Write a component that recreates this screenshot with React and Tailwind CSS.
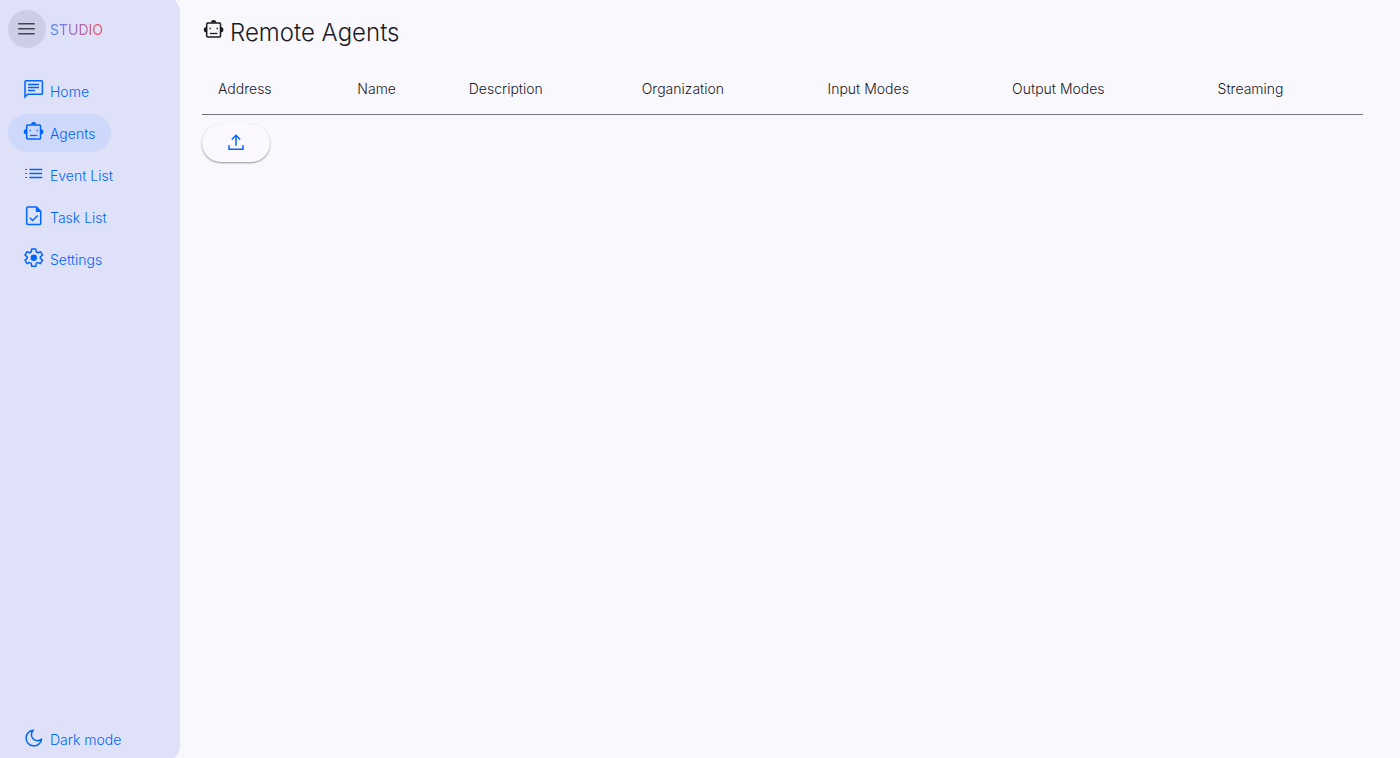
import { useState } from "react";

const navItems = [
  { label: "Home", icon: ChatIcon },
  { label: "Agents", icon: RobotIcon },
  { label: "Event List", icon: ListIcon },
  { label: "Task List", icon: TaskIcon },
  { label: "Settings", icon: GearIcon },
];

const columns = [
  { label: "Address", width: "w-[12%]" },
  { label: "Name", width: "w-[9.6%]" },
  { label: "Description", width: "w-[14.9%]" },
  { label: "Organization", width: "w-[16%]" },
  { label: "Input Modes", width: "w-[15.9%]" },
  { label: "Output Modes", width: "w-[17.7%]" },
  { label: "Streaming", width: "w-[13.9%]" },
];

function Icon({ children }) {
  return (
    <svg
      className="size-6 shrink-0"
      viewBox="0 0 24 24"
      fill="none"
      stroke="currentColor"
      strokeWidth="1.5"
      aria-hidden="true"
    >
      {children}
    </svg>
  );
}

function ChatIcon() {
  return (
    <Icon>
      <path d="M3 20V4.6q0-.9.9-.9h15.6q.9 0 .9.9v11.8q0 .9-.9.9H5.7z" />
      <path d="M6 7.5h11M6 10.5h11M6 13.5h7" strokeWidth="1.3" />
    </Icon>
  );
}

function RobotIcon() {
  return (
    <Icon>
      <rect x="4.7" y="6" width="13.8" height="14" rx="1" />
      <path
        d="M9 5.6a2.6 2.6 0 0 1 5.2 0zM4.5 10v5.4a2.7 2.7 0 0 1 0-5.4zM18.7 10v5.4a2.7 2.7 0 0 0 0-5.4z"
        fill="currentColor"
        stroke="none"
      />
      <path d="M8 16.5h7.4" strokeWidth="1.3" />
      <path d="M7.5 11.6h1.3M14.6 11.6h1.3" />
    </Icon>
  );
}

function ListIcon() {
  return (
    <Icon>
      <path d="M7.4 8.5h12.8M7.4 12.5h12.8M7.4 16.5h12.8" strokeWidth="1.4" />
      <path d="M3.2 8.5H5M3.2 12.5H5M3.2 16.5H5" strokeWidth="1.2" />
    </Icon>
  );
}

function TaskIcon() {
  return (
    <Icon>
      <path d="M5.7 4h8.8l4.2 4.2v12.2q0 1-1 1h-12q-1 0-1-1V5q0-1 1-1z" />
      <path d="M13.8 4v5h5z" fill="currentColor" stroke="none" />
      <path d="m7.8 14.8 2.8 2.7 5-5" strokeWidth="1.4" />
    </Icon>
  );
}

function GearIcon() {
  return (
    <Icon>
      <path
        d="m9.7 21.3-.4-2.8q-.9-.4-1.700-1L5 18.600l-2-3.500 2.200-1.700a6 6 0 0 1 0-1.500L3 10.200l2-3.500 2.600 1.100q.8-.6 1.700-1L9.700 4h4.100l.4 2.800q.9.4 1.700 1l2.600-1.100 2 3.500-2.200 1.700a6 6 0 0 1 0 1.500l2.200 1.700-2 3.500-2.600-1.100q-.8.6-1.700 1l-.4 2.800z"
        strokeLinejoin="round"
      />
      <circle cx="11.8" cy="12.7" r="3.2" fill="currentColor" stroke="none" />
    </Icon>
  );
}

function MoonIcon() {
  return (
    <Icon>
      <path d="M11.3 4.3a7.8 7.8 0 1 0 8.3 8.8 5.3 5.3 0 0 1-8.3-8.8z" strokeLinejoin="round" />
    </Icon>
  );
}

function UploadIcon() {
  return (
    <Icon>
      <path d="M12 14.7V5M7.8 8.500 12 4.300l4.200 4.200M5 14.200v4h14v-4" />
    </Icon>
  );
}

export default function App() {
  const [active, setActive] = useState("Agents");

  return (
    <div className="flex h-screen overflow-hidden bg-[#faf8ff] font-['Inter',sans-serif] text-sm font-light text-[#1a1b21]">
      <aside className="-my-1 flex w-[180px] shrink-0 flex-col rounded-r-2xl bg-[#dfe1f9] px-2 pt-[14px] text-[#0066ff]">
        <div className="flex items-center gap-1">
          <button
            type="button"
            aria-label="Toggle menu"
            className="flex size-[38px] items-center justify-center rounded-full bg-[#cccde6] text-[#44464f]"
          >
            <Icon>
              <path d="M3.200 6.800h16.500M3.200 11.800h16.500M3.200 16.800h16.500" />
            </Icon>
          </button>
          <span className="bg-linear-to-r from-[#3186ff] via-[#a06cc4] via-45% to-[#e8505b] bg-clip-text pt-0.5 font-normal text-transparent">
            STUDIO
          </span>
        </div>

        <nav className="mt-6 flex flex-col items-start gap-1">
          {navItems.map(({ label, icon: NavIcon }) => (
            <button
              key={label}
              type="button"
              onClick={() => setActive(label)}
              className={`flex h-[38px] items-center gap-1 rounded-full pr-4 pl-[14px] ${
                active === label ? "bg-[#ced8fa]" : ""
              }`}
            >
              <span className="pb-1">
                <NavIcon />
              </span>
              <span className="pt-0.5">{label}</span>
            </button>
          ))}
        </nav>

        <button type="button" className="mt-auto mb-1 flex h-[38px] items-center gap-1 px-[14px]">
          <span className="pb-0.5">
            <MoonIcon />
          </span>
          <span className="pt-0.5">Dark mode</span>
        </button>
      </aside>

      <main className="min-w-0 flex-1 pt-[17px] pr-[37px] pl-[22px]">
        <h1 className="flex items-center gap-1 text-2xl">
          <span className="pb-2">
            <RobotIcon />
          </span>
          Remote Agents
        </h1>
        <table className="mt-[11px] w-full table-fixed border-collapse">
          <thead>
            <tr className="h-[54px] border-b border-[#757780]">
              {columns.map(({ label, width }) => (
                <th key={label} scope="col" className={`${width} px-4 pt-1 text-left font-light`}>
                  {label}
                </th>
              ))}
            </tr>
          </thead>
        </table>
        <button
          type="button"
          aria-label="Upload agent"
          className="mt-[9px] flex h-[38px] w-[68px] items-center justify-center rounded-full bg-[#fbf9ff] text-[#0066ff] shadow-[0_1px_2px_rgba(0,0,0,0.4)]"
        >
          <UploadIcon />
        </button>
      </main>
    </div>
  );
}
